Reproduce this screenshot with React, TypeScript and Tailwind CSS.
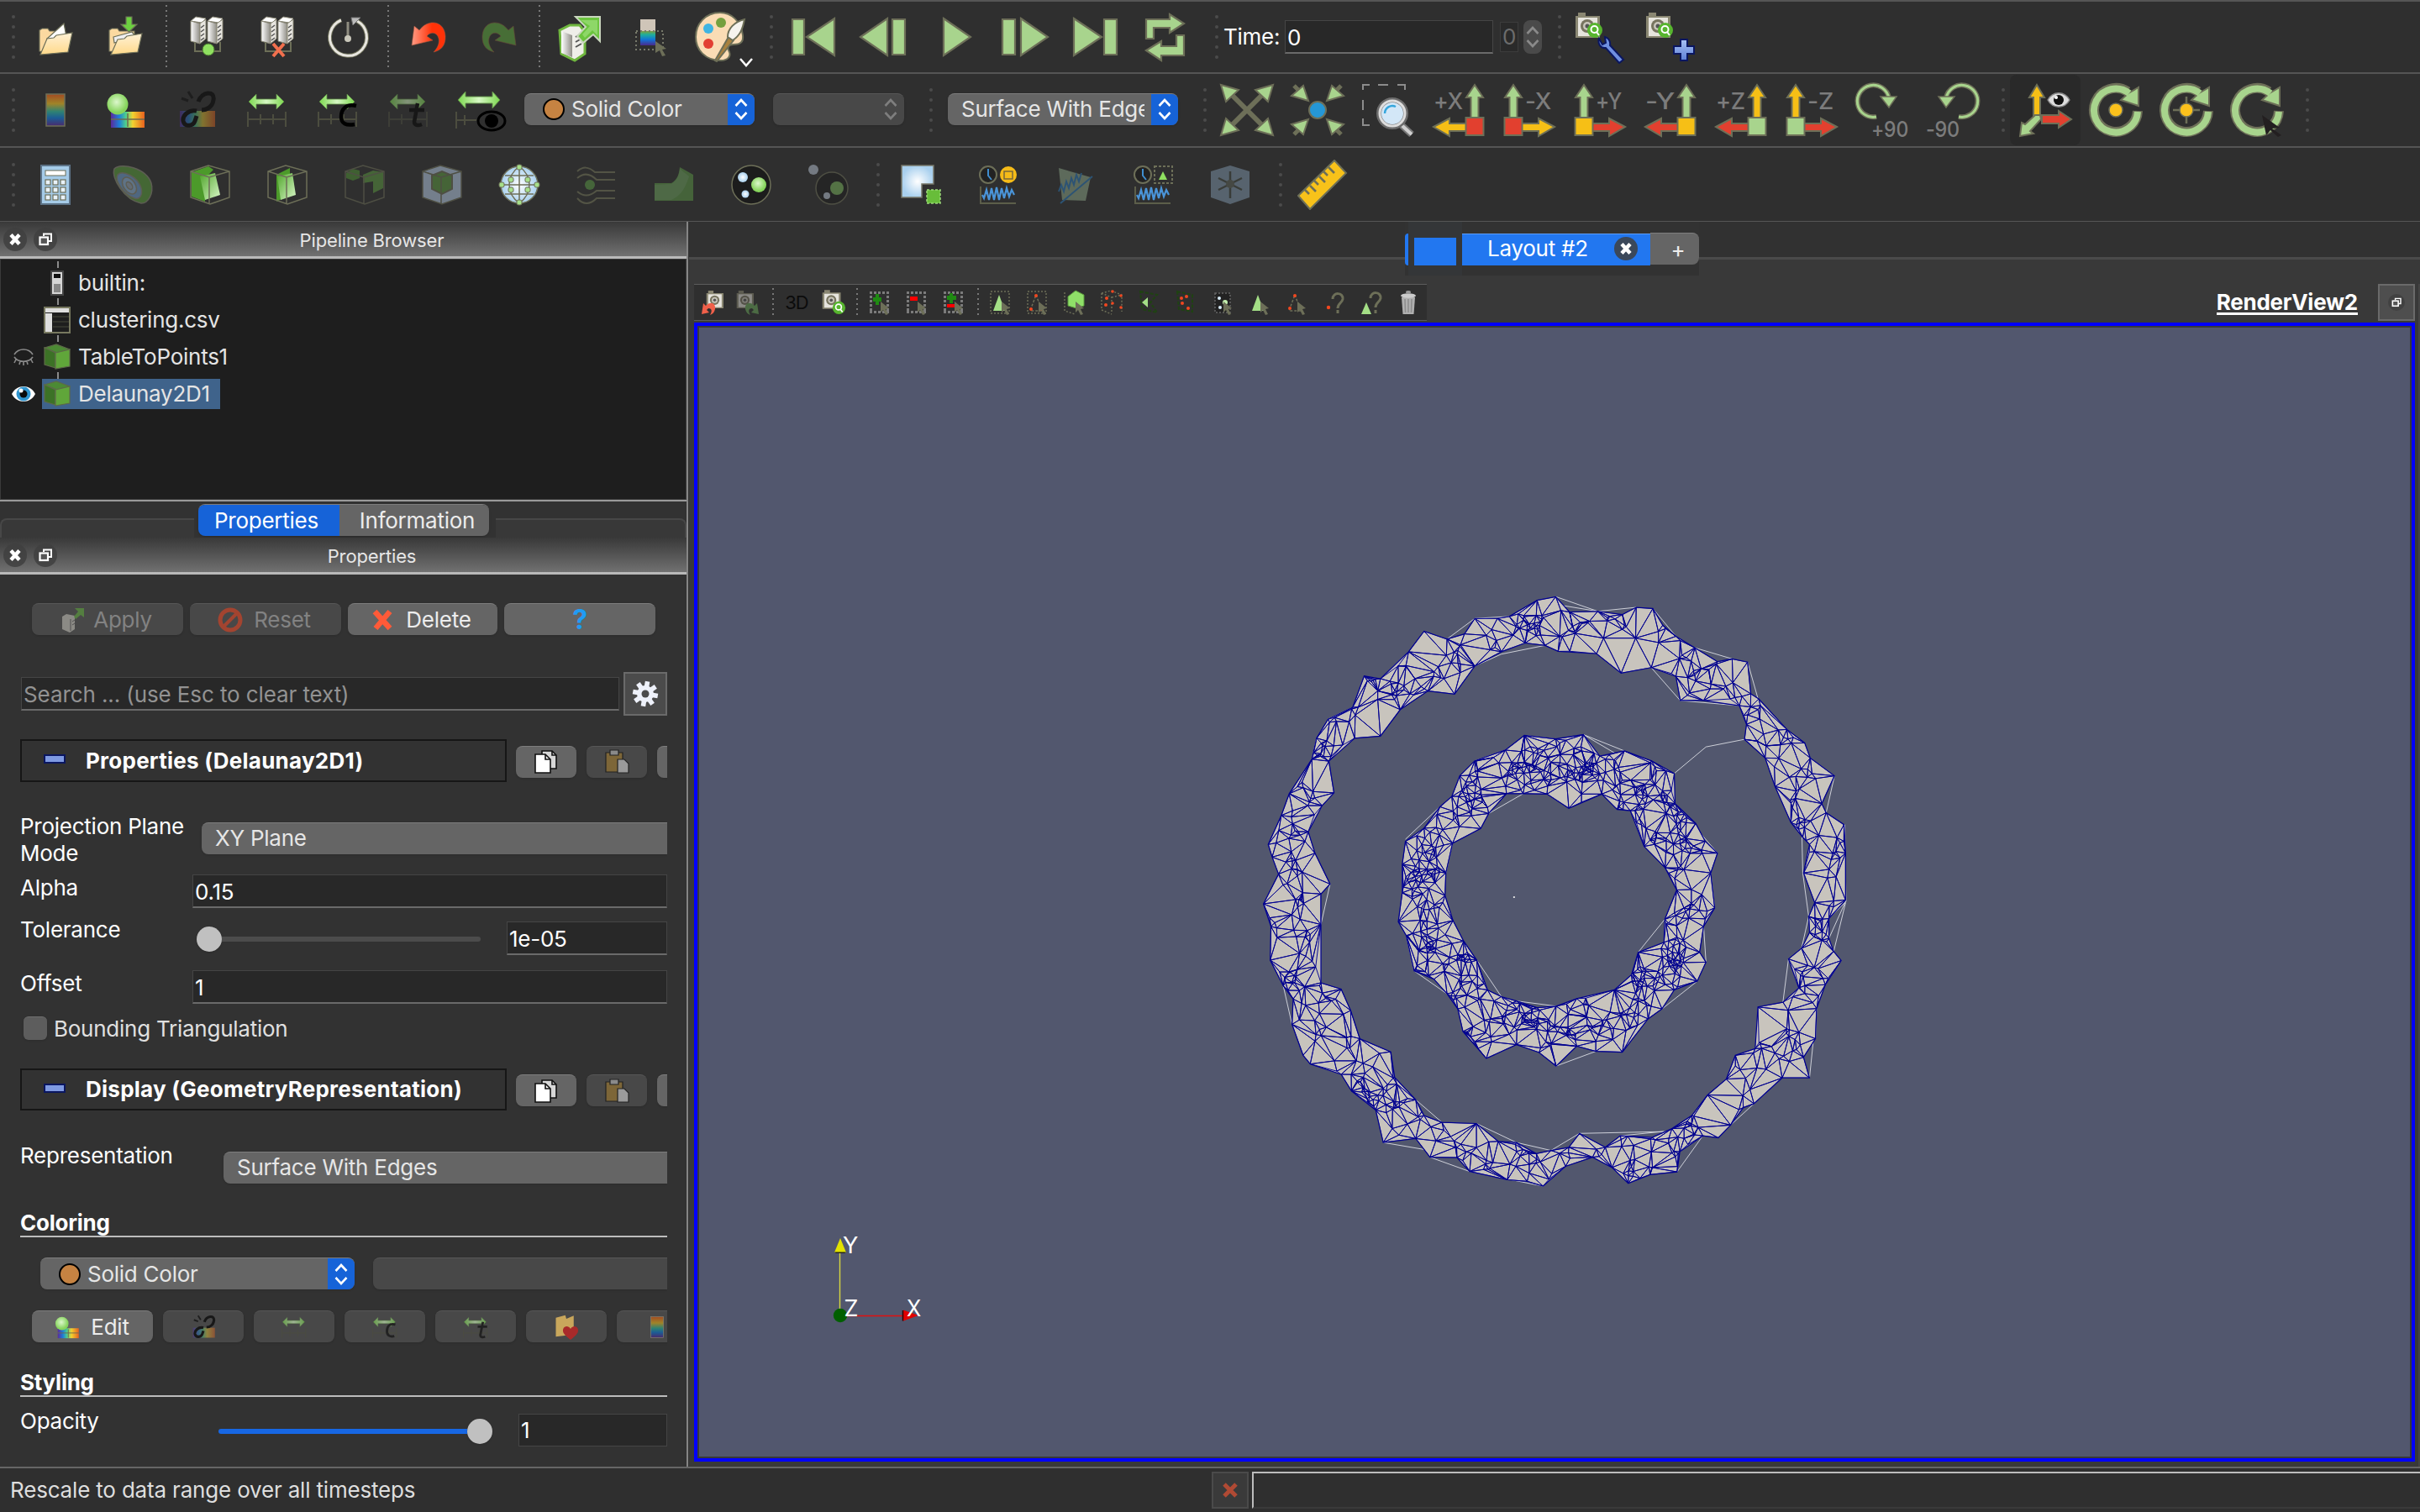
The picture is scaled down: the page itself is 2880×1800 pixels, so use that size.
import React from "react";

type Pt = [number, number];
const OL = "#6d6f58";
const GR = "#a8d48d";

/* ---------- mesh ---------- */

const outerA: Pt[] = [[787,43],[822,82],[893,80],[955,88],[990,70],[1032,73],[1057,115],[1090,143],[1138,172],[1195,207],[1232,200],[1271,208],[1279,288],[1299,301],[1370,378],[1415,412],[1429,450],[1490,495],[1458,565],[1469,588],[1514,618],[1518,690],[1518,808],[1476,855],[1476,905],[1488,938],[1507,961],[1467,1022],[1445,1082],[1442,1158],[1412,1205],[1427,1257],[1358,1257],[1287,1322],[1260,1332],[1228,1376],[1197,1408],[1158,1403],[1100,1443],[1093,1494],[1025,1501],[970,1523],[929,1483],[880,1457],[812,1480],[755,1530],[715,1518],[665,1514],[570,1493],[538,1458],[470,1457],[434,1410],[352,1420],[333,1338],[272,1290],[246,1248],[168,1222],[150,1200],[122,1122],[125,1058],[100,1025],[67,960],[69,875],[50,818],[88,743],[72,700],[62,668],[95,595],[115,540],[172,453],[184,400],[213,352],[275,322],[304,243],[345,250],[416,182],[455,130],[513,150],[557,137],[583,98],[640,98],[670,93],[740,52]];
const outerB: Pt[] = [[760,166],[793,181],[890,187],[952,236],[1028,222],[1090,244],[1101,305],[1160,305],[1250,318],[1268,365],[1263,403],[1315,450],[1340,522],[1380,613],[1410,650],[1427,668],[1412,740],[1440,815],[1425,850],[1427,890],[1407,930],[1374,957],[1400,1030],[1360,1066],[1297,1078],[1290,1183],[1240,1200],[1217,1260],[1170,1300],[1130,1352],[1080,1385],[1030,1407],[950,1403],[912,1432],[847,1397],[820,1432],[775,1440],[738,1448],[688,1420],[642,1417],[587,1372],[500,1369],[455,1352],[434,1312],[381,1256],[371,1191],[293,1158],[270,1087],[246,1033],[195,1017],[195,870],[195,793],[218,768],[180,690],[163,636],[198,570],[228,538],[215,458],[280,400],[345,395],[395,328],[465,281],[532,289],[583,218],[650,182],[710,160]];
const innerA: Pt[] = [[857,391],[898,445],[960,432],[1028,457],[1086,489],[1088,565],[1140,615],[1164,660],[1195,690],[1178,740],[1188,828],[1160,875],[1150,940],[1166,965],[1144,1013],[1086,1035],[1055,1083],[1020,1108],[955,1192],[888,1190],[840,1177],[788,1227],[745,1193],[688,1173],[612,1208],[553,1140],[540,1083],[513,1045],[480,1008],[430,987],[410,898],[390,863],[400,790],[400,718],[408,660],[455,627],[495,573],[525,547],[545,495],[583,457],[660,430],[708,393],[787,402]];
const innerB: Pt[] = [[765,541],[820,577],[903,541],[942,580],[975,583],[1010,673],[1063,727],[1092,783],[1062,857],[1060,915],[995,940],[978,997],[935,1035],[840,1057],[788,1076],[740,1080],[688,1063],[650,1052],[615,1035],[588,960],[555,912],[528,860],[508,797],[510,740],[527,665],[598,628],[618,590],[663,540],[705,540]];

const looseEdges =
  "M787 43L893 80L990 70M808 66L893 80M1032 73L1090 143M1138 172L1232 200M1271 208L1297 300M1490 495L1469 588M1516 618L1519 812L1476 855M1518 812L1476 905M1518 815L1488 938M1507 961L1467 1022M1445 1082L1427 1257M1442 1158L1445 1082M1028 222L1101 305L1250 318M1086 489L1166 422L1263 403M1062 857L995 940M588 960L650 1052M857 391L960 432M857 391L940 440M583 457L660 430M408 655L495 573M1088 565L1195 690M1178 740L1188 828M1160 875L1166 965M1055 1083L1144 1013M888 1190L788 1227M430 987L410 898M430 987L513 1045M618 590L705 540M510 740L527 665M400 718L400 830M688 1063L788 1076M708 393L787 402M513 150L583 98L670 93M345 250L416 182M213 352L275 322M184 400L172 453M218 768L195 870M100 1025L122 1122M434 1312L500 1369M587 1372L688 1420L775 1440L847 1397L1080 1392M950 1403L1060 1392M1158 1403L1093 1494M1228 1376L1358 1257M352 1420L470 1440M470 1457L570 1493L755 1530L812 1480M1374 957L1360 1066M1408 650L1410 740L1425 850L1407 930M583 218L650 188L760 166";

const inside = (p: Pt, poly: Pt[]) => {
  let r = false;
  for (let i = 0, j = poly.length - 1; i < poly.length; j = i++) {
    const [xi, yi] = poly[i];
    const [xj, yj] = poly[j];
    if (yi > p[1] !== yj > p[1] && p[0] < ((xj - xi) * (p[1] - yi)) / (yj - yi) + xi) r = !r;
  }
  return r;
};

type Tri = { a: number; b: number; c: number; x: number; y: number; r: number };

/* Bowyer-Watson triangulation of the ring between two polygons. */
function ringMesh(a: Pt[], b: Pt[], r0: number, spread: number, n: number, seed: number) {
  let s = seed;
  const rnd = () => {
    s = (s * 1664525 + 1013904223) % 4294967296;
    return s / 4294967296;
  };
  const pts: Pt[] = [[-9000, -9000], [12000, -9000], [800, 14000], ...a, ...b];
  const base = pts.length;
  const cx = 787;
  const cy = 790;
  let guard = 0;
  while (pts.length < n + base && guard++ < 40000) {
    let p: Pt;
    if (pts.length > base + 60 && rnd() < 0.4) {
      const q = pts[base + Math.floor(rnd() * (pts.length - base))];
      p = [q[0] + (rnd() - 0.5) * 40, q[1] + (rnd() - 0.5) * 40];
    } else {
      const t = rnd() * Math.PI * 2;
      const d = r0 + (rnd() + rnd() + rnd() - 1.5) * spread;
      p = [cx + Math.cos(t) * d, cy + Math.sin(t) * d];
    }
    if (inside(p, a) && !inside(p, b)) pts.push(p);
  }
  const mk = (i: number, j: number, k: number): Tri => {
    const [ax, ay] = pts[i];
    const [bx, by] = pts[j];
    const [kx, ky] = pts[k];
    const d = 2 * (ax * (by - ky) + bx * (ky - ay) + kx * (ay - by)) || 1e-9;
    const A = ax * ax + ay * ay;
    const B = bx * bx + by * by;
    const C = kx * kx + ky * ky;
    const x = (A * (by - ky) + B * (ky - ay) + C * (ay - by)) / d;
    const y = (A * (kx - bx) + B * (ax - kx) + C * (bx - ax)) / d;
    return { a: i, b: j, c: k, x, y, r: (ax - x) ** 2 + (ay - y) ** 2 };
  };
  let tris = [mk(0, 1, 2)];
  for (let i = 3; i < pts.length; i++) {
    const [px, py] = pts[i];
    const edges = new Map<string, [number, number] | null>();
    const keep: Tri[] = [];
    for (const t of tris) {
      if ((px - t.x) ** 2 + (py - t.y) ** 2 < t.r) {
        for (const [u, v] of [[t.a, t.b], [t.b, t.c], [t.c, t.a]]) {
          const k = Math.min(u, v) + "_" + Math.max(u, v);
          edges.set(k, edges.has(k) ? null : [u, v]);
        }
      } else keep.push(t);
    }
    edges.forEach((e) => e && keep.push(mk(e[0], e[1], i)));
    tris = keep;
  }
  let d = "";
  for (const t of tris) {
    if (t.a < 3 || t.b < 3 || t.c < 3) continue;
    const [p, q, w] = [pts[t.a], pts[t.b], pts[t.c]];
    const m: Pt = [(p[0] + q[0] + w[0]) / 3, (p[1] + q[1] + w[1]) / 3];
    if (inside(m, a) && !inside(m, b))
      d += `M${p[0].toFixed(1)} ${p[1].toFixed(1)}L${q[0].toFixed(1)} ${q[1].toFixed(1)}L${w[0].toFixed(1)} ${w[1].toFixed(1)}Z`;
  }
  return d;
}

const poly = (p: Pt[]) => "M" + p.map((q) => q.join(" ")).join("L") + "Z";
const ringOuter = poly(outerA) + poly(outerB);
const ringInner = poly(innerA) + poly(innerB);
const meshOuter = ringMesh(outerA, outerB, 675, 95, 480, 7);
const meshInner = ringMesh(innerA, innerB, 343, 85, 620, 23);

function Mesh() {
  return (
    <svg viewBox="0 0 1568 1568" className="absolute left-[650px] top-[302px] h-[740px] w-[740px]">
      <clipPath id="ro"><path d={ringOuter} clipRule="evenodd" /></clipPath>
      <clipPath id="ri"><path d={ringInner} clipRule="evenodd" /></clipPath>
      <path d={looseEdges} fill="none" stroke="#d5d7de" strokeWidth="2" />
      <path d={ringOuter} fill="#c8c4bd" fillRule="evenodd" stroke="#00008f" strokeWidth="2.6" />
      <path d={ringInner} fill="#c8c4bd" fillRule="evenodd" stroke="#00008f" strokeWidth="2.6" />
      <path d={meshOuter} clipPath="url(#ro)" fill="none" stroke="#00008f" strokeWidth="2" />
      <path d={meshInner} clipPath="url(#ri)" fill="none" stroke="#00008f" strokeWidth="2" />
      <rect x="680" y="799" width="4" height="4" fill="#e8e8e8" />
    </svg>
  );
}

function Axes() {
  return (
    <svg viewBox="980 1460 130 120" className="absolute left-[150px] top-[1072px] h-[120px] w-[130px]" fontFamily="Inter, sans-serif">
      <path d="M999.5 1490V1560" stroke="#d8d840" strokeWidth="1.4" />
      <path d="M1005 1566.5H1076" stroke="#e01010" strokeWidth="1.6" />
      <path d="M1000 1474L1007 1491H993Z" fill="#e2e200" />
      <path d="M993 1490.5H1007L1005 1492H995Z" fill="#222" />
      <path d="M1093 1566L1075 1559.500V1572.500Z" fill="#e00000" />
      <path d="M1074.500 1560V1572.500" stroke="#300" strokeWidth="1.500" />
      <circle cx="1000" cy="1566" r="8.200" fill="#005f00" />
      <g fill="#fff" fontSize="27">
        <text x="1003" y="1492">Y</text>
        <text x="1004.500" y="1567">Z</text>
        <text x="1079" y="1567" textLength="17" lengthAdjust="spacingAndGlyphs">X</text>
      </g>
    </svg>
  );
}

/* ---------- icons ---------- */

function Defs() {
  return (
    <svg className="absolute h-0 w-0">
      <defs>
        <linearGradient id="rain" x1="0" y1="0" x2="1" y2="0">
          <stop offset="0" stopColor="#5a2a9c" /><stop offset=".25" stopColor="#1e7fd8" /><stop offset=".45" stopColor="#4fd08a" />
          <stop offset=".65" stopColor="#f2d230" /><stop offset="1" stopColor="#e8611e" />
        </linearGradient>
        <linearGradient id="cool" x1="0" y1="0" x2="0" y2="1">
          <stop offset="0" stopColor="#7fa03a" /><stop offset=".25" stopColor="#1fae9c" /><stop offset=".6" stopColor="#1273d6" /><stop offset="1" stopColor="#4a2a8c" />
        </linearGradient>
        <linearGradient id="rainV" x1="0" y1="0" x2="0" y2="1">
          <stop offset="0" stopColor="#a24b22" /><stop offset=".3" stopColor="#a08428" /><stop offset=".55" stopColor="#2e8273" />
          <stop offset=".75" stopColor="#1c5c95" /><stop offset="1" stopColor="#4a2a6c" />
        </linearGradient>
        <radialGradient id="gball" cx=".45" cy=".4"><stop offset="0" stopColor="#dcf7cc" /><stop offset="1" stopColor="#86d45c" /></radialGradient>
        <radialGradient id="wball"><stop offset="0" stopColor="#fff" /><stop offset="1" stopColor="#a9d0ee" /></radialGradient>
        <linearGradient id="gface" x1="0" y1="0" x2="1" y2="1"><stop offset="0" stopColor="#4fa52a" /><stop offset="1" stopColor="#d9f7c8" /></linearGradient>
        <linearGradient id="arr"><stop offset="0" stopColor="#7dd850" /><stop offset=".5" stopColor="#d6f7c4" /><stop offset="1" stopColor="#7dd850" /></linearGradient>
        <linearGradient id="fold" x1="0" y1="0" x2="0" y2="1"><stop offset="0" stopColor="#fff1d6" /><stop offset="1" stopColor="#ffd98a" /></linearGradient>
        <linearGradient id="metal"><stop offset="0" stopColor="#fff" /><stop offset="1" stopColor="#8f8d86" /></linearGradient>
        <linearGradient id="bluev" x1="0" y1="0" x2="0" y2="1"><stop offset="0" stopColor="#a9c2f4" /><stop offset="1" stopColor="#5c7fd6" /></linearGradient>
        <linearGradient id="redg"><stop offset="0" stopColor="#ff9c86" /><stop offset=".6" stopColor="#ff3208" /></linearGradient>
      </defs>
    </svg>
  );
}

const I64 = ({ children, dim = false }: { children: React.ReactNode; dim?: boolean }) => (
  <div className="flex w-[84px] shrink-0 justify-center">
    <svg viewBox="0 0 64 64" className={dim ? "h-16 w-16 overflow-visible opacity-50" : "h-16 w-16 overflow-visible"}>{children}</svg>
  </div>
);
const I48 = ({ children, dim = false }: { children: React.ReactNode; dim?: boolean }) => (
  <div className="flex w-[92px] shrink-0 justify-center">
    <svg viewBox="0 0 48 48" className={dim ? "h-12 w-12 overflow-visible opacity-50" : "h-12 w-12 overflow-visible"}>{children}</svg>
  </div>
);
const I32 = ({ children, dim = false }: { children: React.ReactNode; dim?: boolean }) => (
  <div className="flex w-11 shrink-0 justify-center">
    <svg viewBox="0 0 32 32" className={dim ? "h-8 w-8 opacity-50" : "h-8 w-8"}>{children}</svg>
  </div>
);

const Handle = ({ className = "" }: { className?: string }) => (
  <div className={"flex w-1 shrink-0 flex-col gap-2 " + className}>
    {[0, 1, 2, 3, 4].map((i) => <i key={i} className="h-1 w-1 rounded-full bg-[#4b4b4b]" />)}
  </div>
);
const Sep = () => (
  <div className="flex w-3 shrink-0 justify-center self-stretch py-1">
    <div className="w-0.5 bg-[repeating-linear-gradient(to_bottom,#777_0_2px,transparent_2px_6px)]" />
  </div>
);

const Folder = () => (
  <g stroke={OL} strokeWidth="1.2">
    <path d="M13 49V24l3-2h7l2 3h18v10L39 50z" fill="#fbd9a0" />
    <path d="M22 34L42 16l3 16-14 8z" fill="#fff" />
    <path d="M14 53L22 34l8-1 3-3 19-3-5 23z" fill="url(#fold)" />
  </g>
);
const Folder2 = () => (
  <g stroke={OL} strokeWidth="1.2">
    <path d="M12 49V24l3-2h7l2 3h18v10L39 50z" fill="#fbd9a0" />
    <path d="M17 32l22-6 5 6-26 7z" fill="#eee" />
    <path d="M14 53L22 35l8-1 3-3 18-3-5 22z" fill="url(#fold)" />
    <path d="M32 8h7v9h6L35.500 26 26 17h6z" fill="#6cd040" />
  </g>
);
const ServerPair = ({ ok }: { ok: boolean }) => (
  <g>
    {[0, 20].map((x) => (
      <g key={x} transform={`translate(${x} 0)`} stroke="#8a8877" strokeWidth="1">
        <path d="M13 13l6-5 12 2-5 5z" fill="#fff" />
        <path d="M13 13l11 3v24l-11-3z" fill="url(#metal)" />
        <path d="M24 16l7-5v23l-7 6z" fill="#e8e6e0" />
        <path d="M25 21l4-3M25 26l4-3M25 31l4-3M25 36l4-3" stroke="#555" strokeWidth="1.500" />
      </g>
    ))}
    <path d="M18 38v11h30V38" fill="none" stroke={OL} strokeWidth="2" />
    {ok ? <circle cx="34" cy="47" r="7" fill="#8fe060" stroke="#4c7a30" /> : <path d="M27 40l13 15M40 40L27 55" stroke="#f2704e" strokeWidth="4" />}
  </g>
);
const Curl = ({ fill }: { fill: string }) => (
  <path d="M12 42L15 19l6 5C31 10 51 12 52 31c.5 11-5 17-14 19 6-6 8-13 5-19-3-5-9-5-13 0l7 5z" fill={fill} stroke="#9a5540" strokeWidth=".6" />
);
const Pal = () => (
  <g stroke={OL} strokeWidth="2">
    <path d="M31 3C13 3 2 17 2 32s11 28 30 28c8 0 12-5 10-10-3-6-2-9 5-9 8 0 12-3 11-11C56 13 44 3 31 3z" fill="#fadcb5" />
    <g strokeWidth="0">
      <circle cx="32" cy="15" r="6" fill="#74a03f" /><circle cx="17" cy="22" r="6" fill="#3fb4e2" /><circle cx="17" cy="40" r="6" fill="#e23f33" />
    </g>
    <path d="M25 60L41 32l6 4-20 25z" fill="#a8813f" />
    <path d="M40 32c0-10 8-18 20-21-2 11-5 19-14 25z" fill="#f5f3ee" />
  </g>
);
const Rng = ({ dx = 0 }: { dx?: number }) => (
  <g>
    <path d={`M${10 + dx} 22l9-9v6h24v-6l9 9-9 9v-6H${19 + dx}v6z`} fill="url(#arr)" stroke="#5d8a45" strokeWidth=".8" />
    <path d="M9 34v18M54 34v18M24 37v12M39 37v12M9 43h45" stroke="#4c4d3f" strokeWidth="2" fill="none" />
  </g>
);
const Chain = () => (
  <g>
    <rect x="12" y="33" width="42" height="19" fill="url(#rain)" opacity=".42" />
    <path d="M34 22c4-12 20-14 18-2-1 8-8 12-14 12M32 33c-10-2-17 6-16 12 2 8 12 6 14 0l2-6" fill="none" stroke="#181818" strokeWidth="5" />
    <path d="M14 18l8 3M22 10l5 8" stroke="#1e1e1e" strokeWidth="3" />
  </g>
);
const EditMap = () => (
  <g>
    <rect x="14" y="34" width="40" height="19" fill="url(#rain)" />
    <path d="M14 43h40M34 36v16" stroke="#6d6a50" strokeWidth="1.500" />
    <circle cx="22" cy="25" r="12.500" fill="url(#gball)" />
  </g>
);
const Dir = ({ t, up, side, box, flip = false }: { t: string; up: string; side: string; box: string; flip?: boolean }) => (
  <g>
    <g transform={flip ? "translate(64 0) scale(-1 1)" : undefined} stroke={OL} strokeWidth="2">
      <path d="M51 2l10 15h-5.500v25h-9V17H41z" fill={up} />
      <path d="M2 52l19-10v6h20v9H21v6z" fill={side} />
      <rect x="40.500" y="41" width="21" height="21" fill={box} />
    </g>
    <text x={flip ? 27 : 2} y="31" fontSize="27" fontWeight="500" textLength={flip ? 31 : 35} lengthAdjust="spacingAndGlyphs" fill="#7c7c7c" fontFamily="Inter, sans-serif">{t}</text>
  </g>
);
const Spin = ({ children }: { children?: React.ReactNode }) => (
  <g>
    <path d="M58 33A26 26 0 1 1 46 10" fill="none" stroke={OL} strokeWidth="12" />
    <path d="M59 5v22L38 20l9-8z" fill={GR} stroke={OL} strokeWidth="2" />
    <path d="M58 34A26 26 0 1 1 48 12" fill="none" stroke={GR} strokeWidth="8" />
    {children}
  </g>
);
const CubeWire = () => <path d="M1 8L22 1 47 8v31L24 47 1 39zM1 8l22 7 24-7M23 15v32" fill="none" stroke={OL} strokeWidth="1.500" />;
const Cam = () => (
  <g>
    <path d="M4 3h9v4h17v26H1V7h3z" fill="#8a8772" />
    <rect x="4" y="9" width="23" height="22" fill="#e6e4dd" />
    <circle cx="15" cy="19" r="8" fill="#77745f" /><circle cx="15" cy="19" r="5" fill="#c9c6bb" /><circle cx="15" cy="19" r="2.500" fill="#555" />
  </g>
);
const Q = () => (
  <g>
    <circle cx="24" cy="24" r="9" fill="#57b52e" />
    <circle cx="23.500" cy="23" r="4" fill="none" stroke="#fff" strokeWidth="2" /><path d="M26 26l3 4" stroke="#fff" strokeWidth="2" />
  </g>
);
const Cursor = () => <path d="M16 15l10 8-4 1 3 6-3 1-3-6-3 3z" fill="#6d6f58" />;
const Dots = () => <path d="M3 4.500h23M3 27.500h23M4.500 3v26M24.500 3v26" fill="none" stroke="#7b7b7b" strokeWidth="3" strokeDasharray="3 2" />;
const Thin = () => <rect x="3" y="3" width="22" height="26" fill="none" stroke="#6d6f58" strokeWidth="1.500" strokeDasharray="2 2" />;
const GreenCube = () => (
  <svg viewBox="0 0 32 32" className="h-8 w-8 shrink-0" stroke="#5d6a48" strokeWidth="1.200">
    <path d="M1 5l14-4 16 6-15 4z" fill="#4c8a34" /><path d="M1 5l13 6v18L1 25z" fill="#3c7226" /><path d="M14 11l17-4v20l-17 3z" fill="#60a63a" />
  </svg>
);

/* ---------- widgets ---------- */

const Chevrons = ({ c = "stroke-white" }: { c?: string }) => (
  <svg viewBox="0 0 16 26" className={"h-[26px] w-4 " + c} fill="none" strokeWidth="2.600">
    <path d="M1.500 9L8 2l6.500 7M1.500 17L8 24l6.500-7" />
  </svg>
);
const Combo = ({ text, w, dot, className = "" }: { text: string; w: string; dot?: boolean; className?: string }) => (
  <div className={`flex h-[38px] shrink-0 overflow-hidden rounded-lg border-t border-[#7d7d7d] bg-[#656565] shadow ${w} ${className}`}>
    <div className={"flex min-w-0 flex-1 items-center overflow-hidden whitespace-nowrap pr-2 text-[#e6e6e6] " + (dot ? "pl-[22px]" : "pl-4")}>
      {dot && <i className="mr-2 h-[26px] w-[26px] shrink-0 rounded-full border-2 border-black bg-[#c68342]" />}
      <span className="overflow-hidden">{text}</span>
    </div>
    <div className="flex w-8 items-center justify-center bg-[#1663d8]"><Chevrons /></div>
  </div>
);
const Field = ({ v, className = "" }: { v: string; className?: string }) => (
  <div className={"flex h-10 items-center border border-b-2 border-[#454545] border-b-[#6a6a6a] bg-[#282828] pl-0.5 pt-0.5 text-white " + className}>{v}</div>
);
const Cut = ({ v, className = "" }: { v: string; className?: string }) => (
  <div className={"flex h-[38px] items-center rounded-l-lg border-t border-[#7d7d7d] bg-[#656565] pb-0.5 pl-4 text-[#e6e6e6] shadow " + className}>{v}</div>
);
const Btn = ({ dim, className = "", children }: { dim?: boolean; className?: string; children?: React.ReactNode }) => (
  <div className={"flex h-[38px] shrink-0 items-center justify-center rounded-lg border-t shadow " + (dim ? "border-[#575757] bg-[#484848] text-[#828282] " : "border-[#7d7d7d] bg-[#656565] text-[#ececec] ") + className}>{children}</div>
);
const Mini = ({ children }: { children: React.ReactNode }) => <svg viewBox="0 0 64 64" className="h-10 w-10">{children}</svg>;

const RoundX = ({ cls = "h-7 w-7" }: { cls?: string }) => (
  <svg viewBox="0 0 28 28" className={cls}>
    <circle cx="14" cy="14" r="14" fill="#3f3f3f" opacity=".85" />
    <path d="M9 8.500l10 11M19 8.500l-10 11" stroke="#fff" strokeWidth="4.500" />
  </svg>
);
const RoundDup = ({ cls = "h-7 w-7" }: { cls?: string }) => (
  <svg viewBox="0 0 28 28" className={cls}>
    <circle cx="14" cy="14" r="14" fill="#3f3f3f" opacity=".85" />
    <path d="M12 10V7.500h9v8.500h-3" fill="none" stroke="#fff" strokeWidth="2" />
    <rect x="7.500" y="11.500" width="9.500" height="8.500" fill="#555" stroke="#fff" strokeWidth="2.200" />
  </svg>
);
const TitleBar = ({ t }: { t: string }) => (
  <div className="flex h-11 shrink-0 items-center border-b-[3px] border-[#b9b9b9] bg-gradient-to-b from-[#393939] to-[#717171] pl-1">
    <RoundX /><RoundDup cls="ml-2 h-7 w-7" />
    <div className="flex-1 pt-0.5 text-center text-[22px] tracking-[-0.15px] text-[#e6e6e6]">{t}</div>
  </div>
);
const GroupHead = ({ t, h }: { t: string; h: string }) => (
  <div className={"ml-6 flex shrink-0 items-center " + h}>
    <div className="flex h-full w-[579px] shrink-0 items-center border-2 border-[#161616] pl-[26px] text-white">
      <div className="mb-1 h-[11px] w-[26px] border-2 border-[#0a1660] bg-[#7f9ae2]" />
      <b className="pl-6 font-bold tracking-[0.25px]">{t}</b>
    </div>
    <Btn className="ml-[11px] mt-0.5 w-[72px]">
      <svg viewBox="0 0 32 32" className="h-8 w-8" stroke="#111" strokeWidth="1.600"><path d="M11 3h12l5 5v16H11z" fill="#d8d8d8" /><path d="M3 7h12l6 6v16H3z" fill="#fff" /><path d="M15 7v6h6M23 3v5h5" fill="none" /></svg>
    </Btn>
    <Btn dim className="ml-3 mt-0.5 w-[72px]">
      <svg viewBox="0 0 32 32" className="h-8 w-8" stroke="#222" strokeWidth="1.200"><path d="M3 5h20v23H3z" fill="#7d6638" /><path d="M8 2h10v6H8z" fill="#8a8a8a" /><path d="M17 13h8l5 5v11H17z" fill="#9a9a9a" /></svg>
    </Btn>
    <Btn className="ml-3 mt-0.5 w-8" />
  </div>
);
const Section = ({ t }: { t: string }) => (
  <div className="ml-6 h-[33px] shrink-0 border-b-2 border-[#bdbdbd] font-bold leading-8 tracking-[-0.25px] text-white">{t}</div>
);
const Label = ({ t, w }: { t: string; w: string }) => <div className={"shrink-0 pl-6 leading-8 text-white " + w}>{t}</div>;

function Toolbars() {
  const Y = "#f6bf16";
  const R = "#e2402f";
  return (
    <div className="shrink-0">
      <div className="flex h-[88px] items-center border-b-2 border-t-2 border-[#555] pl-3.5">
        <Handle className="mr-1.5" />
        <I64><Folder /></I64>
        <I64><Folder2 /></I64>
        <Sep />
        <I64><ServerPair ok /></I64>
        <I64><ServerPair ok={false} /></I64>
        <I64>
          <path d="M24 12A22 22 0 1 0 43 13" fill="none" stroke={OL} strokeWidth="5" />
          <path d="M24 12A22 22 0 1 0 43 13" fill="none" stroke="#e8e6e0" strokeWidth="3" />
          <path d="M36 9h11l-9 9z" fill="#bbb" stroke="#777" /><path d="M32 14v20" stroke="#8f8d80" strokeWidth="3" /><circle cx="32" cy="34" r="4" fill="#c9c7ba" />
        </I64>
        <Sep />
        <I64><Curl fill="url(#redg)" /></I64>
        <I64 dim><g transform="translate(64 0) scale(-1 1)"><Curl fill="#5fae3e" /></g></I64>
        <Sep />
        <I64>
          <path d="M8 24l12-6h12l6 8v26l-12 8-16-8z" fill="#efeee9" stroke="#6fb63e" strokeWidth="3" />
          <path d="M10 25l13 5v26l-13-5z" fill="url(#metal)" /><path d="M27 32l7-4M27 38l7-4M27 44l7-4" stroke="#555" strokeWidth="2" />
          <path d="M27 8h29v29l-8-8-12 10-7-8 10-11z" fill="#6cc43f" stroke="#c9d6bd" strokeWidth="2" />
          <path d="M33 12h20v18l-6-6-9 9-3-4 9-10z" fill="#a5e583" opacity=".6" />
        </I64>
        <I64>
          <rect x="20" y="11" width="18" height="14" fill="#cfc5b8" /><rect x="20" y="25" width="18" height="17" fill="url(#cool)" />
          <rect x="15" y="25" width="32" height="22" fill="none" stroke="#77796a" strokeWidth="2" strokeDasharray="2 3" />
          <path d="M38 37l13 9-5 1 4 7-4 1-3-7-5 3z" fill="#6d6f58" />
        </I64>
        <div className="flex w-[84px] shrink-0 items-end">
          <svg viewBox="0 0 64 64" className="ml-2.5 h-16 w-16"><Pal /></svg>
          <svg viewBox="0 0 18 12" className="-ml-[11px] h-3 w-[18px] translate-y-1 fill-none stroke-white" strokeWidth="2.500"><path d="M2 2l7 8 7-8" /></svg>
        </div>
        <Handle className="mx-4 mr-1.5" />
        <div className="flex text-[#a8d48d]">
          {[
            "M7 11h14v42H7zM24 32L57 10v44z",
            "M4 32L36 10v44zM42 11h15v42H42z",
            "M19 10L51 32 19 54z",
            "M5 11h15v42H5zM27 10L59 32 27 54z",
            "M6 10L39 32 6 54zM42 11h15v42H42z",
            "M8 34V11h28V5l17 11-17 11v-6H17v13zM53 30v24H26v6L8 48l18-11v6h18V30z",
          ].map((d) => (
            <I64 key={d}><path d={d} fill="currentColor" stroke={OL} strokeWidth="2.200" /></I64>
          ))}
        </div>
        <Handle className="ml-4 mr-[6px]" />
        <span className="w-[73px] text-white">Time:</span>
        <Field v="0" className="w-[248px]" />
        <div className="ml-2 flex h-9 w-[22px] items-center border border-[#3c3c3c] bg-[#2a2a2a] pl-0.5 text-[#6c6c6c]">0</div>
        <div className="ml-1.5 flex h-10 w-[22px] items-center justify-center rounded-lg bg-[#4a4a4a]"><Chevrons c="stroke-[#8a8a8a]" /></div>
        <Handle className="ml-[19px] mr-4" />
        <svg viewBox="0 0 64 64" className="h-16 w-16"><Cam /><Q />
          <path d="M29 34c-2 6 2 12 8 11l16 18 5-4-16-17c1-5-2-9-6-10l1 7-4 2z" fill="#6f8fe0" stroke="#0a1660" strokeWidth="2" />
        </svg>
        <svg viewBox="0 0 64 64" className="ml-5 h-16 w-16"><Cam /><Q />
          <path d="M42 35h8v8h8v9h-8v8h-8v-8h-8v-9h8z" fill="url(#bluev)" stroke="#0a1660" strokeWidth="2" />
        </svg>
      </div>

      <div className="flex h-[88px] items-center border-b-2 border-[#555] pl-3.5">
        <Handle className="mr-1.5" />
        <I64><rect x="21" y="13" width="22" height="38" fill="url(#rainV)" stroke={OL} strokeWidth="1.500" /></I64>
        <I64><EditMap /></I64>
        <I64><Chain /></I64>
        <I64><Rng /></I64>
        <I64><Rng /><path d="M54 27c-12-3-18 4-18 13 0 8 6 11 16 9" fill="none" stroke="#000" strokeWidth="4.500" /></I64>
        <I64 dim><Rng /><path d="M43 24l-4 22c0 4 4 5 9 3M33 32h18" fill="none" stroke="#000" strokeWidth="4.500" /></I64>
        <I64>
          <path d="M7 20l9-10v6h32v-6l9 10-9 10v-6H16v6z" fill="url(#arr)" stroke="#5d8a45" />
          <path d="M5 34v20M5 44h24M15 38v12" stroke="#4c4d3f" strokeWidth="2" />
          <ellipse cx="47" cy="45" rx="16" ry="11" fill="none" stroke="#000" strokeWidth="3" /><circle cx="47" cy="45" r="8" fill="#000" />
        </I64>
        <Combo text="Solid Color" w="w-[274px]" dot className="mb-[3px] ml-3" />
        <Btn dim className="mb-[3px] ml-[22px] w-[156px] !justify-end pr-2"><Chevrons c="stroke-[#7e7e7e]" /></Btn>
        <Handle className="ml-[30px] mr-[18px]" />
        <Combo text="Surface With Edges" w="w-[274px]" className="mb-[3px]" />
        <Handle className="ml-[30px] mr-1.5" />
        <I64>
          <path d="M8 8l48 48M56 8L8 56" stroke={OL} strokeWidth="6" />
          <g fill={GR} stroke={OL} strokeWidth="2"><path d="M1 2l21 6L7 22zM63 2l-6 20L42 8zM1 62l6-20 15 14zM63 62L42 56l15-14z" /></g>
        </I64>
        <I64>
          <path d="M4 3l12 12M60 3L48 15M4 61l12-12M60 61L48 49" stroke={OL} strokeWidth="5" />
          <g fill={GR} stroke={OL} strokeWidth="2"><path d="M21 21L1 15 15 3zM43 21L49 3l14 12zM21 43l-6 18L1 49zM43 43l20 6-14 12z" /></g>
          <circle cx="32" cy="32" r="10" fill="#2597d6" stroke={OL} strokeWidth="2" />
        </I64>
        <I64>
          <path d="M2 8V2h8M20 2h12M43 2h9v6M2 20v12M2 42v8h8" fill="none" stroke="#8c8c8c" strokeWidth="2" />
          <path d="M48 50l12 11" stroke="#777" strokeWidth="8" /><path d="M48 50l12 11" stroke="#d0d0d0" strokeWidth="4" />
          <circle cx="37" cy="36" r="16" fill="#d3e7f7" stroke="#6c6c6c" strokeWidth="6" /><circle cx="37" cy="36" r="15" fill="none" stroke="#ddd" strokeWidth="3" />
          <path d="M28 36a9 9 0 0 1 13-8" fill="none" stroke="#35a6dc" strokeWidth="2.500" />
        </I64>
        <I64><Dir t="+X" up={GR} side={Y} box={R} /></I64>
        <I64><Dir t="-X" up={GR} side={Y} box={R} flip /></I64>
        <I64><Dir t="+Y" up={GR} side={R} box={Y} flip /></I64>
        <I64><Dir t="-Y" up={GR} side={R} box={Y} /></I64>
        <I64><Dir t="+Z" up={Y} side={R} box={GR} /></I64>
        <I64><Dir t="-Z" up={Y} side={R} box={GR} flip /></I64>
        {[false, true].map((f) => (
          <I64 key={String(f)}>
            <g transform={f ? "translate(64 0) scale(-1 1)" : undefined}>
              <path d="M25 40A19 19 0 1 1 40 17" fill="none" stroke={OL} strokeWidth="6" />
              <path d="M25 40A19 19 0 1 1 40 18" fill="none" stroke={GR} strokeWidth="3" />
              <path d="M30 16h19l-9 13z" fill={GR} stroke={OL} strokeWidth="1.500" />
            </g>
            <text x={f ? 0 : 19} y="64" fontSize="26" fontWeight="500" textLength={f ? 40 : 44} lengthAdjust="spacingAndGlyphs" fill="#7c7c7c" fontFamily="Inter, sans-serif">{f ? "-90" : "+90"}</text>
          </I64>
        ))}
        <Handle className="ml-4 mr-1.5" />
        <div className="flex h-[84px] items-center rounded-lg bg-[#292929]">
          <I64>
            <g stroke={OL} strokeWidth="2">
              <path d="M22 2l9 15h-5v24h-8V17h-5z" fill={Y} /><path d="M28 38h20v-5l15 10-15 10v-5H28z" fill={R} /><path d="M20 38h6l1 5-13 14 4 3-16 3 2-16 4 2z" fill={GR} />
            </g>
            <path d="M35 20c6-11 20-11 26 0-6 11-20 11-26 0z" fill="#ddd" stroke="#888" strokeWidth="1.500" /><circle cx="48" cy="20" r="6" fill="#111" /><circle cx="45" cy="17" r="2" fill="#fff" />
          </I64>
        </div>
        <I64><Spin><circle cx="32" cy="32" r="8" fill="#fbc11c" stroke={OL} strokeWidth="1.500" /></Spin></I64>
        <I64><Spin><path d="M32 16v32M16 32h32" stroke={OL} strokeWidth="2.500" /><circle cx="32" cy="32" r="8" fill="#fbc11c" stroke={OL} strokeWidth="1.500" /></Spin></I64>
        <I64><Spin /><path d="M38 38l21 15-9 1 11 8-4 2-9-8-5 6z" fill="#231f20" /></I64>
        <Handle className="ml-4" />
      </div>

      <div className="flex h-[88px] items-center border-b border-[#555] pl-3.5">
        <Handle className="mr-0.5" />
        <I48>
          <rect x="7" y="1" width="34" height="46" fill="#a5cbe8" stroke="#5c7286" strokeWidth="2" /><rect x="12" y="7" width="24" height="6" fill="#fff" stroke={OL} />
          {[0, 1, 2].map((r) => [0, 1, 2].map((c) => <rect key={`${r}${c}`} x={12 + c * 9} y={18 + r * 9} width="6" height="6" fill="#e8f2fa" stroke={OL} strokeWidth="1.200" />))}
        </I48>
        <I48 dim>
          <g strokeWidth="1.500" stroke="#8b8b78"><path d="M2 5C10-3 40 4 46 22c3 12-3 24-12 24C14 42-2 16 2 5z" fill="#5aa03a" /><path d="M6 12c6-6 24 2 28 16 2 9-2 14-8 12C14 36 2 20 6 12z" fill="#6f9fd0" /><ellipse cx="20" cy="25" rx="7" ry="11" transform="rotate(-35 20 25)" fill="#8fb6dc" /><ellipse cx="20" cy="25" rx="3" ry="5" transform="rotate(-35 20 25)" fill="#9ab" /></g>
        </I48>
        <I48><path d="M2 9L22 2l6 4-10 10v28L2 38z" fill="#4c9a2a" /><path d="M12 14l18-4 6 26-18 6z" fill="url(#gface)" /><CubeWire /></I48>
        <I48><path d="M11 12l16-8v32l-16 8z" fill="#4c9a2a" /><path d="M12 14l18-4 4 26-18 6z" fill="url(#gface)" /><CubeWire /></I48>
        <I48 dim><path d="M2 10l8-5 8 2v9l-8 3-8-3z" fill="#4f9134" /><path d="M22 12l12-5 12 2v19l-12 6V20l-12 2z" fill="#5b9a40" /><CubeWire /></I48>
        <I48 dim><path d="M1 8L22 1 47 8v31L24 47 1 39z" fill="#b9cfe8" /><path d="M12 13l12-5 12 5v16l-12 6-12-6z" fill="#5c9a40" stroke={OL} strokeWidth="2" /><CubeWire /></I48>
        <I48>
          <circle cx="24" cy="24" r="22" fill="url(#wball)" stroke={OL} strokeWidth="1.500" /><path d="M2 24h44M24 2v44M7 13h34M7 35h34M24 2c-16 12-16 32 0 44 16-12 16-32 0-44" fill="none" stroke={OL} strokeWidth="1.500" />
          {[[24, 3], [24, 45], [3, 24], [45, 24], [14, 30], [34, 30], [14, 18], [34, 18]].map(([x, y]) => <rect key={`${x}-${y}`} x={x - 3} y={y - 3} width="6" height="6" rx="2" fill="#a6e08a" stroke={OL} />)}
        </I48>
        <I48 dim><circle cx="16" cy="24" r="6" fill="#5b9b46" /><path d="M1 8C8 2 14 2 22 9h24M1 16c7-6 15-6 23 2h22M1 40c7 8 15 8 23 0h22M1 32c7 6 15 6 23-1h22" fill="none" stroke="#777a5c" strokeWidth="2" /></I48>
        <I48 dim><path d="M1 22h20C28 18 30 12 31 3l16 9v31H1z" fill="#5b9846" /><path d="M1 24v18h20C34 36 38 26 42 14l-11-9c-1 9-4 14-10 18z" fill="#8fb98a" opacity=".35" /></I48>
        <I48><circle cx="24" cy="24" r="23" fill="#1c1c1c" stroke={OL} strokeWidth="1.500" /><circle cx="14" cy="15" r="6" fill="url(#wball)" /><circle cx="33" cy="24" r="9" fill="url(#gball)" /><circle cx="17" cy="35" r="4.500" fill="url(#wball)" /></I48>
        <I48 dim><circle cx="28" cy="28" r="19" fill="#1c1c1c" stroke={OL} strokeWidth="1.500" /><circle cx="6" cy="6" r="6" fill="#b8c4d4" /><circle cx="34" cy="28" r="8" fill="#79b45c" /><circle cx="22" cy="37" r="4" fill="#b8c4d4" /></I48>
        <Handle className="ml-[11px] mr-[3px]" />
        <I48><path d="M1 1h38v22H25v16H1z" fill="url(#wball)" stroke="#77776a" strokeWidth="1.500" /><rect x="31" y="30" width="16" height="16" fill="#68bd3a" stroke="#9bd87a" strokeWidth="1.500" strokeDasharray="3 2" /></I48>
        {[0, 1].map((k) => (
          <React.Fragment key={k}>
            {k === 1 && (
              <I48 dim><path d="M4 4l38 11-6 28-28-1z" fill="#8ba587" /><path d="M6 46L44 14M4 32l3-8 3 8 3-12 3 8 3-12 3 8 3-12 3 8 3-10" fill="none" stroke="#2b78b8" strokeWidth="2" /></I48>
            )}
            <I48>
              <circle cx="12" cy="12" r="10" fill="#222" stroke={OL} strokeWidth="2" /><path d="M12 5v8l4 5" fill="none" stroke="#3f8ed0" strokeWidth="2" />
              {k === 0 ? <><circle cx="36" cy="12" r="10" fill="#f5bb18" /><path d="M31 8h10v9H31z" fill="none" stroke="#77683a" strokeWidth="1.500" /></> : <><rect x="26" y="2" width="21" height="20" fill="none" stroke={OL} strokeWidth="2" strokeDasharray="3 2" /><path d="M36 8l5 10H31z" fill="#8fe060" /></>}
              <path d="M3 26v20h42" fill="none" stroke="#5c5e4a" strokeWidth="2" />
              <path d="M5 36l2 4 3-10 3 12 3-14 3 14 3-15 3 15 3-14 3 12 3-12 3 10 3-8 3 6" fill="none" stroke="#4a94d8" strokeWidth="2.200" />
            </I48>
          </React.Fragment>
        ))}
        <I48 dim><path d="M1 8L24 1l23 7v31L24 47 1 39z" fill="#7f97ad" /><path d="M24 8v32M10 16l28 14M38 16L10 30" stroke="#444a42" strokeWidth="2.500" /><circle cx="24" cy="23" r="5" fill="#5c6258" /></I48>
        <Handle className="ml-3" />
        <svg viewBox="0 0 60 60" className="ml-[18px] h-[60px] w-[60px]">
          <path d="M44 1l14 15L15 59 1 43z" fill="#f8c21a" stroke={OL} strokeWidth="2" />
          <path d="M9 36l5 5M15 31l7 7M20 25l5 5M26 20l7 7M31 14l5 5M37 9l7 7" stroke={OL} strokeWidth="2.600" />
        </svg>
      </div>
    </div>
  );
}

function PipelineRow({ t, icon, eye, sel }: { t: string; icon: React.ReactNode; eye?: React.ReactNode; sel?: boolean }) {
  return (
    <div className="flex h-11 flex-col">
      <i className="ml-[67px] h-2 w-0.5 shrink-0 bg-[#8a8a8a]" />
      <div className="flex h-9 items-center">
        <div className="flex w-[49px] justify-center pl-1">{eye}</div>
        <div className={"flex h-9 items-center pl-0.5 pr-3 " + (sel ? "bg-[#3f638b]" : "")}>
          {icon}
          <span className="whitespace-nowrap pl-[9px] text-[#e4e4e4]">{t}</span>
        </div>
      </div>
    </div>
  );
}

function LeftPanel() {
  return (
    <div className="flex w-[819px] shrink-0 flex-col border-r-2 border-[#858585]">
      <TitleBar t="Pipeline Browser" />
      <div className="h-[287px] shrink-0 border border-[#3a3a3a] bg-[#1e1e1e] pt-0.5">
        <PipelineRow t="builtin:" icon={
          <svg viewBox="0 0 32 32" className="h-8 w-8"><rect x="8" y="1" width="16" height="30" fill="#444" /><rect x="10" y="3" width="12" height="26" fill="#d6d6d6" /><rect x="12" y="5" width="8" height="5" fill="#111" /><rect x="12" y="17" width="8" height="10" fill="#888" /></svg>} />
        <PipelineRow t="clustering.csv" icon={
          <svg viewBox="0 0 32 32" className="h-8 w-8"><rect x="1" y="1" width="30" height="30" fill="#1e1e1e" stroke="#77785f" strokeWidth="2" /><path d="M2 2h28v5H2zM2 8h8v22H2z" fill="#dedede" /><path d="M11 12h19M11 18h19M11 24h19" stroke="#3a3b32" strokeWidth="1.500" /></svg>} />
        <PipelineRow t="TableToPoints1" icon={<GreenCube />} eye={
          <svg viewBox="0 0 24 22" className="h-[22px] w-6 fill-none stroke-[#8a8a8a]" strokeWidth="1.600"><path d="M1 8C6 0 18 0 23 8M1 11c5 7 17 7 22 0M3 14l-2 4M8 16l-1 4M12 17v4M16 16l1 4M21 14l2 4" /></svg>} />
        <PipelineRow sel t="Delaunay2D1" icon={<GreenCube />} eye={
          <svg viewBox="0 0 28 20" className="h-5 w-7"><path d="M0 10C6-2 22-2 28 10 22 22 6 22 0 10z" fill="#fff" /><circle cx="14" cy="10" r="8.500" fill="#2f95cf" /><circle cx="14" cy="10" r="4.500" fill="#0a0a0a" /><circle cx="11" cy="6" r="2.500" fill="#fff" /></svg>} />
      </div>
      <div className="flex h-[45px] shrink-0 border-t-2 border-[#9a9a9a]">
        <div className="mt-[20px] w-[231px] rounded-tl-lg border-l-2 border-t-2 border-[#474747] bg-[#383838]" />
        <div className="ml-[5px] mt-[3px] flex h-[38px] w-[346px] overflow-hidden rounded-lg border-t border-[#7d7d7d] shadow">
          <div className="flex w-[168px] items-center justify-center bg-[#1663d8] pr-1.5 text-white">Properties</div>
          <div className="flex flex-1 items-center justify-center bg-[#656565] pl-[7px] text-[#ececec]">Information</div>
        </div>
        <div className="ml-2 mt-[20px] flex-1 rounded-tr-lg border-r-2 border-t-2 border-[#474747] bg-[#383838]" />
      </div>
      <TitleBar t="Properties" />

      <div className="flex w-[794px] flex-1 flex-col overflow-hidden">
        <div className="ml-[38px] mt-[34px] flex shrink-0 gap-2">
          <Btn dim className="w-[180px] gap-2 pr-1">
            <svg viewBox="0 0 32 32" className="h-8 w-8 opacity-60"><path d="M3 12l5-3 10 2v16l-6 4-9-4z" fill="#b8b6ae" /><path d="M13 15v14M15 18l3-2M15 22l3-2" stroke="#555" /><path d="M18 2h11v11l-4-3-6 5-2-3 5-6z" fill="#5ca33c" /></svg>Apply
          </Btn>
          <Btn dim className="w-[180px] gap-3 pr-1">
            <svg viewBox="0 0 32 32" className="h-8 w-8"><circle cx="16" cy="16" r="12" fill="none" stroke="#a34430" strokeWidth="5" /><path d="M8 24L24 8" stroke="#a34430" strokeWidth="4" /></svg>Reset
          </Btn>
          <Btn className="w-[178px] gap-3 pr-1.5">
            <svg viewBox="0 0 32 32" className="h-8 w-8"><path d="M7 6l18 20M25 6L8 26" stroke="#ff5a38" strokeWidth="6.500" /></svg>Delete
          </Btn>
          <Btn className="w-[180px] text-[32px] font-bold !text-[#1f9cf5]">?</Btn>
        </div>
        <div className="ml-[25px] mt-11 flex h-[52px] shrink-0 items-center">
          <Field v="Search ... (use Esc to clear text)" className="w-[712px] tracking-[-0.1px] !text-[#929292]" />
          <div className="ml-[5px] flex h-[52px] w-[52px] items-center justify-center border-2 border-[#6a6a6a] bg-[#4b4b4b]">
            <svg viewBox="-16 -16 32 32" className="h-8 w-8">
              {[0, 45, 90, 135].map((a) => <rect key={a} x="-2.800" y="-15" width="5.600" height="30" fill="#eef1fa" transform={`rotate(${a + 10})`} />)}
              <circle r="10" fill="#eef1fa" /><circle r="4.500" fill="#4b4b4b" />
            </svg>
          </div>
        </div>
        <div className="h-7 shrink-0" />
        <GroupHead t="Properties (Delaunay2D1)" h="h-[51px]" />
        <div className="mt-[37px] flex h-16 shrink-0">
          <Label t="Projection Plane Mode" w="w-60" />
          <Cut v="XY Plane" className="mt-[11px] flex-1" />
        </div>
        <div className="mt-[9px] flex h-10 shrink-0"><Label t="Alpha" w="w-[229px]" /><Field v="0.15" className="flex-1" /></div>
        <div className="mt-[10px] flex h-[46px] shrink-0">
          <Label t="Tolerance" w="w-[234px]" />
          <div className="mt-[12px] flex h-[30px] items-center">
            <i className="h-[30px] w-[30px] rounded-full bg-[#c0c0c0] shadow" /><i className="h-1.5 w-[308px] rounded-r-full bg-[#4c4c4c]" />
          </div>
          <Field v="1e-05" className="ml-[31px] mt-1.5 flex-1" />
        </div>
        <div className="mt-[18px] flex h-10 shrink-0"><Label t="Offset" w="w-[229px]" /><Field v="1" className="flex-1" /></div>
        <div className="ml-7 mt-[15px] flex h-7 shrink-0 items-center"><i className="h-7 w-7 rounded-md border-t border-[#6e6e6e] bg-[#5d5d5d] shadow" /><span className="pl-2 pt-px text-[#e0e0e0]">Bounding Triangulation</span></div>
        <div className="h-[34px] shrink-0" />
        <GroupHead t="Display (GeometryRepresentation)" h="h-[50px]" />
        <div className="mt-[38px] flex h-[49px] shrink-0"><Label t="Representation" w="w-[266px]" /><Cut v="Surface With Edges" className="mt-[11px] flex-1" /></div>
        <div className="h-[31px] shrink-0" />
        <Section t="Coloring" />
        <div className="ml-12 mt-6 flex shrink-0"><Combo text="Solid Color" w="w-[374px]" dot /><Btn dim className="ml-[22px] flex-1 rounded-r-none" /></div>
        <div className="ml-[38px] mt-[25px] flex shrink-0 gap-3">
          <Btn className="w-36 gap-2 pr-1.5"><Mini><EditMap /></Mini>Edit</Btn>
          <Btn dim className="w-24"><Mini><Chain /></Mini></Btn>
          <Btn dim className="w-24"><Mini><g opacity=".6"><Rng /></g></Mini></Btn>
          <Btn dim className="w-24"><Mini><g opacity=".6"><Rng /></g><path d="M52 27c-12-3-16 4-16 13 0 8 6 11 14 9" fill="none" stroke="#222" strokeWidth="4.500" /></Mini></Btn>
          <Btn dim className="w-24"><Mini><g opacity=".6"><Rng /></g><path d="M46 22l-5 25c0 4 4 5 9 3M36 31h18" fill="none" stroke="#222" strokeWidth="4.500" /></Mini></Btn>
          <Btn dim className="w-24"><Mini><path d="M12 50V14l18-5 2 7 14-6v36z" fill="#c9a75c" /><path d="M40 56C28 46 24 42 26 35c3-6 10-6 14 0 4-6 11-6 14 0 2 7-2 11-14 21z" fill="#a82a2a" /></Mini></Btn>
          <Btn dim className="w-24"><Mini><rect x="20" y="12" width="24" height="40" fill="url(#rainV)" stroke="#887" /></Mini></Btn>
        </div>
        <div className="h-8 shrink-0" />
        <Section t="Styling" />
        <div className="mt-[13px] flex h-[46px] shrink-0">
          <Label t="Opacity" w="w-[260px]" />
          <div className="mt-[13px] flex h-[30px] items-center"><i className="h-1.5 w-[296px] rounded-l-full bg-[#1767e4]" /><i className="h-[30px] w-[30px] rounded-full bg-[#c0c0c0] shadow" /></div>
          <div className="ml-[31px] mt-[7px] flex flex-1 items-center border border-[#454545] bg-[#282828] pl-0.5 text-white">1</div>
        </div>
      </div>
    </div>
  );
}

function ViewToolbar() {
  const tri = "M13 7l7 19H6z";
  return (
    <div className="flex h-11 items-center border-b border-t border-[#5c5c5c] bg-[#2f2f2f]">
      <I32><g transform="translate(8 0) scale(.7)"><Cam /></g><path d="M3 30l2-13 3 3c6-6 12-3 11 4-1 4-3 6-6 7 3-5 2-8-2-8l-2 2 3 3z" fill="#f0604a" /></I32>
      <I32 dim><g transform="scale(.7)"><Cam /></g><path d="M27 30l-2-13-3 3c-6-6-12-3-11 4 1 4 3 6 6 7-3-5-2-8 2-8l2 2-3 3z" fill="#6aa85a" /></I32>
      <Sep />
      <div className="w-11 text-center text-[22px] tracking-[-1px] text-[#0c0c0c]">3D</div>
      <I32><g transform="translate(2 -1) scale(.75)"><Cam /></g><g transform="translate(2 2) scale(.85)"><Q /></g></I32>
      <Sep />
      <I32><Dots /><path d="M10 6h4v4h3v5h-3v4h-4v-4H7v-5h3z" fill="#1f8a12" /><Cursor /></I32>
      <I32><Dots /><rect x="7" y="9" width="9" height="5" fill="#f00" /><Cursor /></I32>
      <I32><Dots /><path d="M10 5h4v3h4v5h-4v4h-4v-4H7V8h3z" fill="#1f8a12" /><rect x="7" y="18" width="9" height="4" fill="#f00" /><Cursor /></I32>
      <Sep />
      <I32><Thin /><path d={tri} fill="#a4df86" /><Cursor /></I32>
      <I32><Thin /><path d={tri} fill="none" stroke={OL} strokeWidth="1.500" strokeDasharray="3 2" /><g fill="#f2471f"><circle cx="13" cy="8" r="2" /><circle cx="7" cy="24" r="2" /><circle cx="20" cy="24" r="2" /></g><Cursor /></I32>
      <I32><path d="M7 9l9-7 10 5v13l-9 3-10-3z" fill="#8fe068" stroke="#5b9a3e" /><path d="M3 4v22l12 4" fill="none" stroke={OL} strokeWidth="1.500" strokeDasharray="2 2" /><Cursor /></I32>
      <I32><path d="M3 5l11-3 13 5v20M3 5v20l12 5M3 5l12 5v18M15 10l12-3" fill="none" stroke="#6d6f58" strokeWidth="1.500" strokeDasharray="2 2" /><g fill="#f2471f"><circle cx="9" cy="11" r="2" /><circle cx="16" cy="3" r="1.800" /><circle cx="8" cy="19" r="2" /><circle cx="26" cy="8" r="1.800" /><circle cx="16" cy="17" r="1.800" /><circle cx="26" cy="22" r="1.800" /></g></I32>
      <I32><path d="M5 3l20 4-8 9 8 12-18-4z" fill="none" stroke="#1f4312" strokeWidth="2" strokeDasharray="4 2" /><path d="M14 10v12l-7-6z" fill="#a4df86" /></I32>
      <I32><path d="M5 3l18 4v20L7 24z" fill="none" stroke="#1f4312" strokeWidth="2" strokeDasharray="4 2" /><g fill="#f2471f"><circle cx="10" cy="11" r="2" /><circle cx="16" cy="9" r="2" /><circle cx="11" cy="17" r="2" /><circle cx="18" cy="23" r="2" /></g></I32>
      <I32><rect x="6" y="5" width="18" height="23" fill="#222" stroke="#666" strokeWidth="1.500" strokeDasharray="2 2" /><circle cx="11" cy="11" r="2" fill="#d8ecf8" /><circle cx="18" cy="16" r="3" fill="#c4f0ae" /><circle cx="12" cy="22" r="2" fill="#d8ecf8" /><Cursor /></I32>
      <I32><path d={tri} fill="#a4df86" /><Cursor /></I32>
      <I32><path d={tri} fill="none" stroke={OL} strokeWidth="1.500" strokeDasharray="3 2" /><g fill="#f2471f"><circle cx="13" cy="8" r="2" /><circle cx="7" cy="23" r="2" /><circle cx="20" cy="23" r="2" /></g><Cursor /></I32>
      <I32><path d="M14 12c0-9 13-8 12 0-1 5-6 5-6 11M20 25v4" fill="none" stroke={OL} strokeWidth="3" /><circle cx="9" cy="22" r="2.200" fill="#f2471f" /></I32>
      <I32><path d="M15 11c0-9 13-8 12 0-1 5-6 5-6 11M21 25v4" fill="none" stroke={OL} strokeWidth="3" /><path d="M10 16l6 14H4z" fill="#a4df86" /></I32>
      <I32><path d="M8 10h16l-1.500 20h-13z" fill="#b0b0b0" /><path d="M12 12l.5 16M16 12v16M20 12l-.5 16" stroke="#8c8c8c" strokeWidth="1.500" /><ellipse cx="16" cy="8" rx="9" ry="2.800" fill="#ccc" /><rect x="13" y="2" width="6" height="4" rx="2" fill="#999" /></I32>
    </div>
  );
}

function RightPanel() {
  return (
    <div className="flex min-w-0 flex-1 flex-col pl-px">
      <div className="flex h-[74px] flex-col bg-[linear-gradient(to_bottom,#313131_0_42px,#4a4a4a_42px_45px,#393939_45px)]">
        <div className="ml-[852px] flex h-16 items-start self-start bg-[#323232]">
          <div className="mt-3.5 h-[38px] w-1 rounded-l-lg bg-[#2277f0]" />
          <div className="flex h-16 w-16 items-center justify-center bg-[#343638]"><div className="mt-1.5 h-[33px] w-[50px] bg-[#2277f0]" /></div>
          <div className="mt-3.5 flex h-[38px] w-[224px] items-center justify-between border-t border-[#5c9cf5] bg-[#2277f0] pb-1 pl-[30px] pr-[15px] text-white">
            <span>Layout #2</span><RoundX />
          </div>
          <div className="mt-[13px] flex h-[38px] w-[58px] items-center justify-center rounded-r-lg border-t border-[#7d7d7d] bg-[#656565] pl-2 text-[#eee]">+</div>
        </div>
      </div>
      <div className="flex flex-1 flex-col border-r-2 border-[#444] bg-[#393939] pb-1.5 pl-1.5 pr-1">
        <div className="flex h-[46px] shrink-0 items-start">
          <ViewToolbar />
          <div className="flex-1" />
          <b className="mr-6 mt-[5px] h-8 border-b-[3px] border-white font-bold leading-[34px] text-white">RenderView2</b>
          <div className="flex h-11 w-11 items-center justify-center border-2 border-[#6a6a6a] bg-[#4e4e4e]"><RoundDup cls="h-5 w-5" /></div>
        </div>
        <div className="relative flex-1 border-4 border-[#0000ff] bg-[#393939] p-0.5">
          <div className="h-full bg-[#52576e]" />
          <Mesh />
          <Axes />
        </div>
      </div>
    </div>
  );
}

export default function App() {
  return (
    <div className="flex h-[1800px] w-[2880px] flex-col overflow-hidden bg-[#2f2f2f] font-['Inter',sans-serif] text-[26px] leading-8 tracking-[-0.25px]">
      <Defs />
      <Toolbars />
      <div className="flex min-h-0 flex-1 bg-[#323232]">
        <LeftPanel />
        <RightPanel />
      </div>
      <div className="flex h-[54px] shrink-0 border-t-2 border-[#666] pl-3">
        <div className="w-[1430px] pt-[10px] tracking-[-0.18px] text-[#dedede]">Rescale to data range over all timesteps</div>
        <div className="mt-1 flex h-11 w-11 items-center justify-center border-2 border-[#4a4a4a] bg-[#3a3a3a]">
          <svg viewBox="0 0 20 20" className="h-5 w-5"><path d="M3 3l14 14M17 3L3 17" stroke="#b04a34" strokeWidth="5" /></svg>
        </div>
        <div className="ml-1 mt-1 h-11 flex-1 border-b-2 border-l-2 border-t-2 border-[#bcbcbc] border-b-[#3a3a3a]" />
      </div>
    </div>
  );
}
